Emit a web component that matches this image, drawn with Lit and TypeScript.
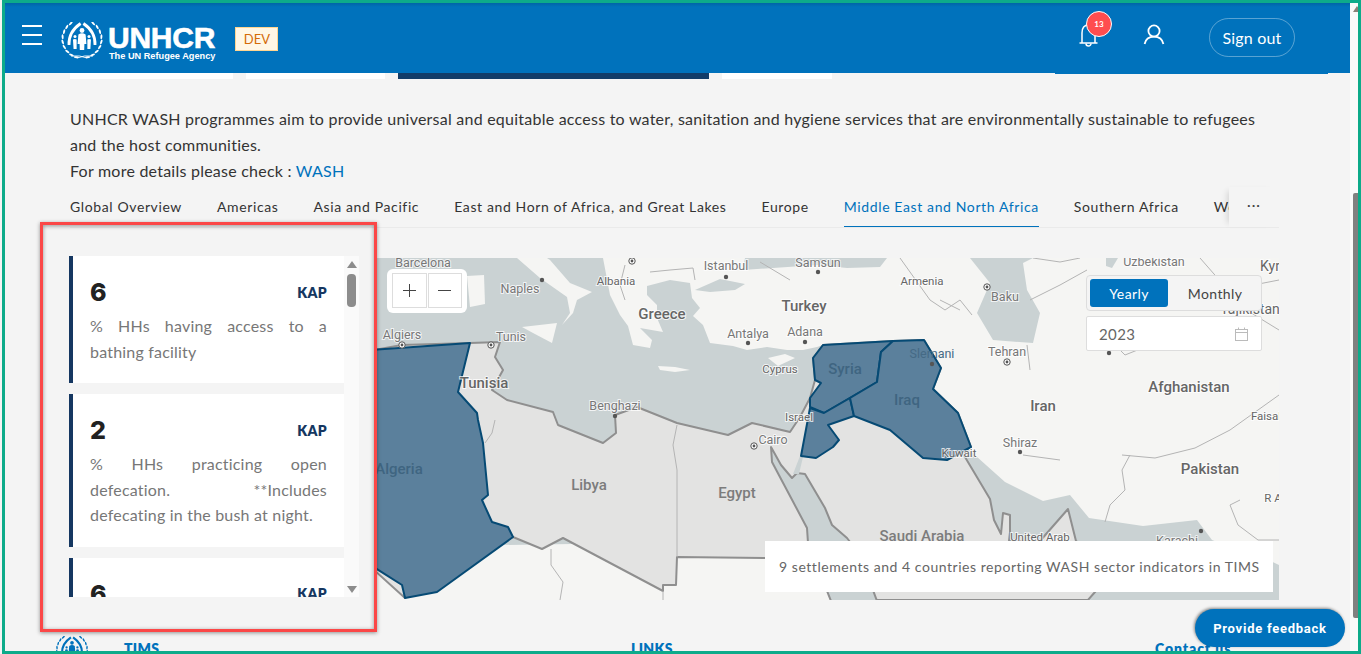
import { LitElement, html, css, svg } from "lit";
import { customElement } from "lit/decorators.js";

const leaves = (side: number) => {
  const out = [];
  for (let i = 0; i < 9; i++) {
    const t = -55 + i * 16;
    const r = (t * Math.PI) / 180;
    const cx = 22 + side * 19.5 * Math.cos(r);
    const cy = 17 + 19 * Math.sin(r);
    const rot = side * (t + 10);
    out.push(svg`<ellipse cx=${cx.toFixed(1)} cy=${cy.toFixed(1)} rx="1" ry="2.5" transform="rotate(${rot.toFixed(0)} ${cx.toFixed(1)} ${cy.toFixed(1)})"></ellipse>`);
  }
  return out;
};

const emblem = (cls: string) => html`<svg class=${cls} viewBox="0 0 44 37">
  <g fill="currentColor">${leaves(1)}${leaves(-1)}</g>
  <g fill="none" stroke="currentColor">
    <path d="M9 23 C8.5 13 14 6 20.6 1.5" stroke-width="2.8"></path>
    <path d="M35 23 C35.5 13 30 6 23.4 1.5" stroke-width="2.8"></path>
    <path d="M11 34 Q20 33 27 36 M33 34 Q24 33 17 36" stroke-width=".9"></path>
  </g>
  <g fill="currentColor">
    <circle cx="22" cy="8.5" r="2.4"></circle>
    <path d="M18.4 12.6 Q22 10 25.6 12.6 L26.4 22 L24.4 22 L24.2 28 L19.8 28 L19.6 22 L17.6 22 Z"></path>
    <circle cx="15" cy="14.5" r="1.5"></circle>
    <path d="M13 17.6 Q15 16.2 16.6 17.6 L16.6 27 L13.6 27 Z"></path>
    <circle cx="29" cy="14.5" r="1.5"></circle>
    <path d="M27.4 17.6 Q29 16.2 31 17.6 L30.4 27 L27.4 27 Z"></path>
  </g>
</svg>`;

const labels: [string, number, number, string][] = [
  ["Barcelona", 423, 267, "c"], ["Istanbul", 726, 270, "c"], ["Samsun", 818, 267, "c"],
  ["Uzbekistan", 1154, 266, "c"], ["Kyr", 1270, 271, "m"], ["Albania", 616, 285, "s"],
  ["Naples", 520, 293, "c"], ["Armenia", 922, 285, "s"], ["Baku", 1005, 301, "c"],
  ["Turk", 1104, 310, "m"], ["Greece", 662, 319, "k"], ["Turkey", 804, 311, "k"],
  ["Antalya", 748, 338, "c"], ["Adana", 805, 336, "c"], ["Algiers", 402, 339, "c"],
  ["Tunis", 511, 341, "c"], ["Tunisia", 484, 388, "k"], ["Benghazi", 615, 410, "c"],
  ["Cyprus", 780, 373, "s"], ["Syria", 845, 374, "d"], ["Iraq", 907, 405, "d"],
  ["Iran", 1043, 411, "k"], ["Tehran", 1007, 356, "c"], ["Slemani", 932, 358, "dc"],
  ["Shiraz", 1020, 447, "c"], ["Israel", 799, 421, "s"], ["Cairo", 773, 444, "c"],
  ["Afghanistan", 1189, 392, "k"], ["Pakistan", 1210, 474, "k"], ["Algeria", 399, 474, "d"],
  ["Libya", 589, 490, "g"], ["Egypt", 737, 498, "g"], ["Kuwait", 959, 457, "s"],
  ["Saudi Arabia", 922, 541, "g"], ["United Arab", 1040, 541, "s"], ["Emirates", 1040, 556, "s"],
  ["Karachi", 1177, 545, "c"], ["Faisal", 1266, 420, "s"], ["Tajikistan", 1250, 314, "m"],
  ["R A", 1273, 502, "s"], ["G U J.", 1255, 555, "s"],
];

const dots: [number, number, boolean][] = [
  [542, 280, false], [726, 277, false], [818, 272, false], [748, 343, false], [805, 342, false],
  [402, 345, true], [491, 345, true], [615, 416, false], [932, 364, false], [1007, 362, true],
  [1020, 452, false], [754, 446, true], [987, 287, true], [1201, 531, false], [1109, 353, false],
  [632, 261, true],
];

const CARDS = [
  { n: "6", d: "% HHs having access to a bathing facility" },
  { n: "2", d: "% HHs practicing open defecation. **Includes defecating\u00a0in\u00a0the\u00a0bush at night." },
  { n: "6", d: "% HHs with access to a handwashing facility" },
];
const TABS = ["Global Overview", "Americas", "Asia and Pacific", "East and Horn of Africa, and Great Lakes", "Europe", "Middle East and North Africa", "Southern Africa", "West and Central Africa"];

@customElement("app-root")
export class AppRoot extends LitElement {
  static styles = css`
    :host { display: block; width: 1361px; height: 654px; position: relative; overflow: hidden; background: #f4f4f4; font-family: Lato, "Liberation Sans", sans-serif; color: #333; }
    * { box-sizing: border-box; }
    .page { display: flex; height: 654px; padding-left: 5px; }
    .main { flex: 1; min-width: 0; overflow: hidden; }
    .vbar { width: 11px; background: #fafafa; position: relative; display: flex; flex-direction: column; padding: 6px 3px 0 3px; }
    .vup { width: 0; height: 0; border: 4px solid transparent; border-top: 0; border-bottom: 6px solid #8a8178; }
    .vthumb { width: 5px; height: 425px; margin: 181px 0 0 0; background: #808080; border-radius: 2px 0 0 2px; }

    .header { height: 73px; background: linear-gradient(#005a96, #0072bc 7px); display: flex; align-items: center; color: #fff; padding: 0 55px 0 17px; }
    .burger { width: 20px; display: flex; flex-direction: column; gap: 7px; margin-right: 18px; margin-top: -3px; }
    .burger i { display: block; height: 2px; background: #fff; }
    .emb { width: 44px; height: 37px; color: #fff; margin-top: 8px; flex: none; }
    .brand { margin-left: 4px; display: flex; flex-direction: column; font-family: "Liberation Sans", sans-serif; font-weight: 700; margin-top: 13px; }
    .brand b { font-size: 30px; line-height: 26px; letter-spacing: -.25px; -webkit-text-stroke: .6px #fff; }
    .brand span { font-size: 9.2px; line-height: 11px; margin-left: 1px; }
    .dev { margin-left: 20px; width: 43px; height: 24px; background: #fff7e6; border: 1px solid #ffd591; color: #d46b08; font-size: 13px; display: flex; align-items: center; justify-content: center; margin-top: 5px; }
    .right { margin-left: auto; display: flex; align-items: center; }
    .bell { width: 24px; height: 26px; position: relative; margin-right: 41px; margin-top: -3px; }
    .bell svg, .user svg { display: block; }
    .badge { position: absolute; left: 8px; top: -11px; width: 26px; height: 26px; border-radius: 50%; background: #ff4d4f; border: 1px solid #fff; color: #fff; font-size: 8px; font-weight: 700; display: flex; align-items: center; justify-content: center; }
    .user { width: 22px; height: 24px; margin-right: 44px; margin-top: -3px; }
    .signout { width: 86px; height: 39px; border-radius: 20px; border: 1px solid rgba(255,255,255,.35); font-size: 16px; display: flex; align-items: center; justify-content: center; margin-top: 1px; letter-spacing: .2px; }

    .strip { height: 6px; display: flex; padding-left: 65px; gap: 13px; }
    .strip i { display: block; background: #fff; }
    .strip .dark { background: #123d69; }
    .strip .line { background: #0072bc; height: 1px; margin-left: 210px; }

    .intro { margin: 27px 0 0 65px; width: 1209px; font-size: 16px; line-height: 26px; color: #333; letter-spacing: .235px; }
    .intro a { color: #0072bc; text-decoration: none; }

    .tabs { margin: 3px 0 0 65px; width: 1209px; height: 41px; display: flex; border-bottom: 1px solid #eaeaea; position: relative; }
    .tablist { flex: 1; min-width: 0; display: flex; gap: 35px; overflow: hidden; white-space: nowrap; }
    .tab { font-size: 14px; line-height: 40px; height: 41px; color: #333; letter-spacing: .62px; flex: none; }
    .tab.on { color: #0072bc; border-bottom: 2px solid #0072bc; }
    .more { width: 50px; flex: none; background: #f4f4f4; box-shadow: -6px 0 6px -4px rgba(0,0,0,.12); color: #444; display: flex; justify-content: center; align-items: center; font-size: 14px; letter-spacing: 1px; padding-bottom: 6px; }

    .body { margin: 28px 0 0 64px; display: flex; gap: 15px; width: 1210px; height: 344px; }
    .side { width: 290px; height: 341px; flex: none; display: flex; }
    .cards { width: 275px; height: 341px; overflow: hidden; display: flex; flex-direction: column; gap: 11px; }
    .card { flex: none; background: #fff; border-left: 4px solid #153761; padding: 23px 17px 19px; }
    .top { display: flex; justify-content: space-between; align-items: center; height: 26px; }
    .num { font-family: Inter, sans-serif; font-size: 25px; font-weight: 800; color: #222; line-height: 26px; }
    .kap { font-size: 14px; font-weight: 800; color: #153761; letter-spacing: .3px; }
    .desc { margin-top: 8px; font-size: 16px; line-height: 25.6px; color: #777; text-align: justify; letter-spacing: .2px; }
    .track { width: 15px; background: #fafafa; display: flex; flex-direction: column; align-items: center; height: 341px; padding-top: 5px; }
    .up, .down { width: 0; height: 0; border: 5px solid transparent; }
    .up { border-top: 0; border-bottom: 7px solid #8c8c8c; }
    .down { border-bottom: 0; border-top: 7px solid #8c8c8c; margin-top: auto; margin-bottom: 4px; }
    .thumb { width: 9px; height: 33px; background: #8c8c8c; border-radius: 4px; margin-top: 6px; }

    .map { flex: 1; position: relative; height: 342px; margin-top: 2px; overflow: hidden; background: #cad2d3; }
    .map svg.geo { display: block; width: 905px; height: 342px; font-family: Roboto, sans-serif; }
    .geo text { paint-order: stroke; stroke: rgba(255,255,255,.75); stroke-width: 2px; text-anchor: middle; }
    .geo .c { font-size: 12.5px; fill: #777; }
    .geo .s { font-size: 11.5px; fill: #666; }
    .geo .m { font-size: 14px; fill: #666; }
    .geo .k { font-size: 15px; font-weight: 500; fill: #666; }
    .geo .g { font-size: 15px; font-weight: 500; fill: #7c7c7c; stroke: none; }
    .geo .d { font-size: 15px; font-weight: 500; fill: #3f6581; stroke: none; }
    .geo .dc { font-size: 12.5px; fill: #456a85; stroke: none; }

    .zoom { position: absolute; left: 13px; top: 11px; width: 80px; height: 44px; background: #fff; border-radius: 6px; padding: 4px 5px; display: flex; gap: 1px; }
    .zoom span { width: 35px; height: 35px; border: 1px solid #ddd; display: flex; align-items: center; justify-content: center; }
    .ctrl { position: absolute; left: 712px; top: 17px; width: 176px; display: flex; flex-direction: column; gap: 5px; }
    .toggle { height: 36px; background: #f4f4f4; border: 1px solid #ddd; border-radius: 4px; padding: 3px; display: flex; font-size: 14px; }
    .toggle span { width: 80px; display: flex; align-items: center; justify-content: center; border-radius: 3px; color: #444; letter-spacing: .4px; }
    .toggle span + span { width: 92px; padding-left: 4px; }
    .toggle .sel { background: #0072bc; color: #fff; }
    .date { height: 35px; background: #fff; border: 1px solid #ddd; border-radius: 2px; padding: 0 12px; display: flex; align-items: center; justify-content: space-between; font-size: 15px; color: #666; letter-spacing: .4px; }
    .notice { position: absolute; left: 391px; top: 283px; width: 508px; height: 51px; background: #fff; display: flex; align-items: center; padding-left: 14px; font-size: 14px; color: #666; letter-spacing: .54px; white-space: nowrap; }

    .foot { margin: 36px 0 0 50px; display: flex; align-items: flex-start; font-size: 14px; font-weight: 800; color: #0072bc; line-height: 17px; letter-spacing: .3px; }
    .foot .emb2 { width: 34px; height: 29px; color: #0072bc; flex: none; margin-right: 35px; }
    .foot .c1 { width: 507px; margin-top: 4px; }
    .foot .c2 { width: 524px; margin-top: 4px; }
    .foot .c3 { margin-top: 4px; letter-spacing: .9px; }

    .feedback { position: absolute; left: 1195px; top: 609px; width: 150px; height: 38px; border-radius: 19px; background: #0072bc; color: #fff; font-family: Roboto, sans-serif; font-size: 13px; font-weight: 700; letter-spacing: .75px; display: flex; align-items: center; justify-content: center; box-shadow: -1px -1px 3px rgba(0,0,0,.45); }
    .redbox { position: absolute; left: 40px; top: 222px; width: 337px; height: 410px; border: 3px solid #fb4747; box-shadow: 0 1px 4px rgba(0,0,0,.4), inset 0 1px 4px rgba(0,0,0,.4); pointer-events: none; }
    .teal { position: absolute; inset: 0 0 0 2px; border: 3px solid #0dab8a; pointer-events: none; }
  `;

  render() {
    return html`
      <div class="page">
        <div class="main">
          <div class="header">
            <div class="burger"><i></i><i></i><i></i></div>
            ${emblem("emb")}
            <div class="brand"><b>UNHCR</b><span>The UN Refugee Agency</span></div>
            <div class="dev">DEV</div>
            <div class="right">
              <div class="bell">
                <svg width="24" height="26" viewBox="0 0 24 26" fill="none" stroke="#fff" stroke-width="1.5">
                  <path d="M4 20.5 V11 C4 6 6.5 3 10.5 3 C14.5 3 17 6 17 11 V20.5 M1.5 21 H19.5"></path>
                  <path d="M8 21.5 a2.5 2.5 0 0 0 5 0"></path>
                </svg>
                <div class="badge">13</div>
              </div>
              <div class="user">
                <svg width="22" height="24" viewBox="0 0 22 24" fill="none" stroke="#fff" stroke-width="1.8">
                  <circle cx="11" cy="8" r="5.6"></circle>
                  <path d="M1.6 21 C2.6 16 6 13.6 11 13.6 C16 13.6 19.4 16 20.4 21"></path>
                </svg>
              </div>
              <div class="signout">Sign out</div>
            </div>
          </div>
          <div class="strip">
            <i style="width:163px"></i><i style="width:139px"></i><i class="dark" style="width:311px"></i><i style="width:110px"></i><i class="line" style="width:273px"></i>
          </div>
          <div class="intro">
            UNHCR WASH programmes aim to provide universal and equitable access to water, sanitation and hygiene services that are environmentally sustainable to refugees and the host communities.<br />
            For more details please check : <a>WASH</a>
          </div>
          <div class="tabs">
            <div class="tablist">
              ${TABS.map((t, i) => html`<div class="tab ${i === 5 ? "on" : ""}">${t}</div>`)}
            </div>
            <div class="more">···</div>
          </div>
          <div class="body">
            <div class="side">
              <div class="cards">
                ${CARDS.map((c) => html`<div class="card">
                  <div class="top"><span class="num">${c.n}</span><span class="kap">KAP</span></div>
                  <div class="desc">${c.d}</div>
                </div>`)}
              </div>
              <div class="track"><i class="up"></i><i class="thumb"></i><i class="down"></i></div>
            </div>
            <div class="map">
              ${this.renderMap()}
              <div class="zoom">
                <span><svg width="15" height="15" viewBox="0 0 15 15" stroke="#444" stroke-width="1"><path d="M7.5 1 V14 M1 7.5 H14"></path></svg></span>
                <span><svg width="15" height="15" viewBox="0 0 15 15" stroke="#444" stroke-width="1"><path d="M1 7.5 H14"></path></svg></span>
              </div>
              <div class="ctrl">
                <div class="toggle"><span class="sel">Yearly</span><span>Monthly</span></div>
                <div class="date">2023
                  <svg width="15" height="14" viewBox="0 0 15 14" fill="none" stroke="#bbb" stroke-width="1"><rect x="1.5" y="2.5" width="12" height="11"></rect><path d="M1.5 5.5 H13.5 M4.5 .5 V3 M10.5 .5 V3"></path></svg>
                </div>
              </div>
              <div class="notice">9 settlements and 4 countries reporting WASH sector indicators in TIMS</div>
            </div>
          </div>
          <div class="foot">
            ${emblem("emb2")}
            <div class="c1">TIMS</div><div class="c2">LINKS</div><div class="c3">Contact us</div>
          </div>
        </div>
        <div class="vbar"><i class="vup"></i><i class="vthumb"></i></div>
      </div>
      <div class="feedback">Provide feedback</div>
      <div class="redbox"></div>
      <div class="teal"></div>
    `;
  }

  renderMap() {
    const sea = "#cad2d3", lt = "#f5f5f3";
    const thin = "M495 420 L492 433 L485 443 M677 425 L673 445 L677 470 L677 557 M551 549 L551 565 L563 582 L560 600 M663 591 V600 M1023 455 L1060 460 M1130 455 L1122 470 L1125 490 L1110 505 L1105 522 M1122 455 L1155 458 L1195 448 L1230 430 L1279 395 M1240 500 L1230 505 L1238 525 L1258 540 L1279 540 M1033 258 L1060 262 L1080 258 M1087 270 L1060 285 L1030 300 M1027 345 L1030 370 M1200 258 L1228 290 L1279 280 M1230 300 L1279 330 M1100 330 L1125 355 L1150 345 L1190 350 L1230 330 M900 258 L930 300 L945 310 L960 300 L972 315 M760 262 L790 280 M940 300 L960 310 M625 265 L620 285 L625 300 M650 272 L670 270 L693 268 L695 280";
    return svg`<svg class="geo" viewBox="374 258 905 342">
      <rect x="374" y="258" width="905" height="342" fill=${sea}></rect>
      <path fill=${lt} d="M517 258 L540 278 L567 297 L570 313 L562 325 L573 313 L577 300 L592 292 L570 283 L550 260 L547 258 Z"></path>
      <path fill=${lt} d="M522 327 L557 323 L552 343 L533 333 Z"></path>
      <path fill=${lt} d="M467 276 L484 275 L485 304 L470 307 Z"></path>
      <path fill=${lt} d="M658 366 L675 367 L690 370 L675 372 L660 370 Z"></path>
      <path fill=${lt} d="M603 258 L610 295 L620 315 L628 326 L633 345 L650 348 L652 340 L640 328 L663 332 L657 318 L657 305 L647 295 L647 286 L670 280 L690 283 L692 298 L700 308 L693 316 L703 325 L710 343 L733 346 L747 350 L767 347 L787 350 L803 350 L817 347 L823 345 L880 420 L967 448 L1005 482 L1043 501 L1070 495 L1089 518 L1143 526 L1197 520 L1212 540 L1239 551 L1258 555 L1279 565 L1279 258 Z"></path>
      <path fill=${sea} d="M745 258 L743 270 L817 265 L847 268 L880 267 L887 258 Z"></path>
      <path fill=${sea} d="M695 290 L720 279 L745 284 L735 290 L710 292 Z"></path>
      <path fill=${sea} d="M970 258 L990 283 L977 313 L993 340 L1033 343 L1040 313 L1027 290 L1023 263 L1033 258 Z"></path>
      <path fill=${sea} d="M1106 258 L1118 258 L1112 268 L1106 266 Z"></path>
      <path fill=${lt} d="M768 358 L785 354 L795 358 L778 366 Z"></path>
      <path fill=${lt} d="M374 545 L500 545 L831 540 L831 600 L374 600 Z"></path>
      <path fill="#e3e3e2" stroke="#8f8f8f" stroke-width="2" stroke-linejoin="round" d="M374 350 L402 345 L470 343 L500 342 L495 357 L503 370 L492 390 L507 400 L553 412 L558 425 L603 443 L616 433 L615 415 L637 407 L677 423 L728 435 L752 423 L790 432 L800 417 L810 398 L815 380 L813 358 L823 345 L893 341 L924 340 L941 368 L933 389 L958 413 L971 447 L962 452 L990 499 L994 520 L1001 534 L1003 513 L1010 515 L1010 532 L1009 541 L1040 541 L1068 509 L1076 541 L1097 553 L1110 575 L1088 600 L877 600 L840 570 L770 558 L677 557 L676 585 L663 585 L663 591 L563 538 L542 549 L513 537 L405 598 L374 570 Z"></path>
      <path fill=${sea} stroke="#8f8f8f" stroke-width="2" stroke-linejoin="round" d="M771 447 L772 462 L807 528 L808 543 L831 601 L877 601 L860 555 L847 538 L832 525 L825 508 L805 474 L797 473 L792 478 L781 465 Z"></path>
      <path fill=${sea} d="M793 474 L800 456 L803 457 L799 474 Z"></path>
      <path fill="none" stroke="#b4b4b4" stroke-width="1" d=${thin}></path>
      <g fill="#5b809c" stroke="#064a74" stroke-width="2" stroke-linejoin="round">
        <path d="M372 350 L470 343 L458 392 L477 413 L478 420 L483 443 L488 495 L482 500 L492 522 L508 527 L513 537 L437 592 L405 598 L402 585 L372 566 Z"></path>
        <path d="M823 345 L893 341 L881 352 L877 382 L824 413 L810 407 L810 398 L821 383 L815 380 L813 358 Z"></path>
        <path d="M810 408 L824 413 L850 398 L854 416 L828 425 L839 440 L833 447 L816 458 L801 456 Z"></path>
        <path d="M893 341 L924 340 L941 368 L933 389 L958 413 L971 447 L947 460 L923 458 L890 430 L854 416 L850 398 L877 382 L881 352 Z"></path>
      </g>
      ${labels.map(([t, x, y, c]) => svg`<text class=${c} x=${x} y=${y}>${t}</text>`)}
      ${dots.map(([x, y, ring]) => ring
        ? svg`<circle cx=${x} cy=${y} r="3.2" fill="#fff" stroke="#555" stroke-width="1"></circle><circle cx=${x} cy=${y} r="1.4" fill="#555"></circle>`
        : svg`<circle cx=${x} cy=${y} r="2.2" fill="#555"></circle>`)}
    </svg>`;
  }
}
